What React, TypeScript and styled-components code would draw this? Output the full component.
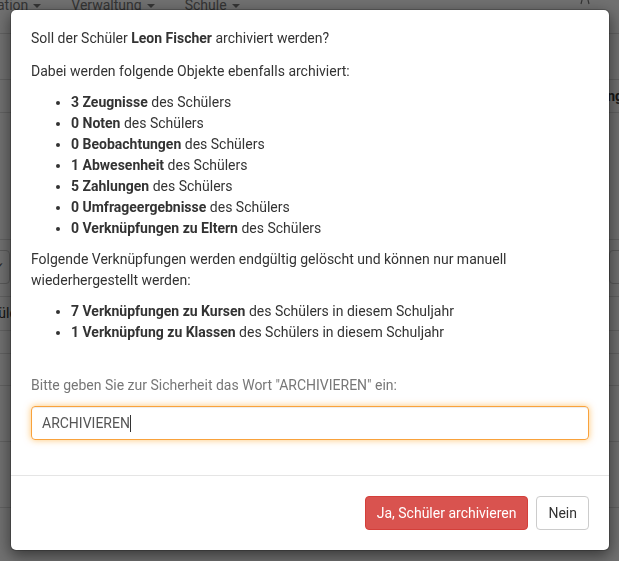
import React from "react";
import styled, { createGlobalStyle } from "styled-components";

const GlobalStyle = createGlobalStyle`
  html, body { margin: 0; padding: 0; }
  body {
    font-family: Roboto, "Liberation Sans", Arial, sans-serif;
    font-size: 14px;
    line-height: 21px;
    color: #333;
    background: #fff;
    overflow: hidden;
  }
  * { box-sizing: border-box; }
`;

/* ---------- background page ---------- */

const Page = styled.div`
  width: 619px;
  height: 561px;
  background: #fff;
  overflow: hidden;
`;

const Navbar = styled.nav`
  height: 34px;
  border-bottom: 1px solid #ddd;
  display: flex;
  align-items: flex-start;
  gap: 30px;
  margin-left: -3px;
`;

const NavItem = styled.span`
  color: #777;
  font-size: 14px;
  line-height: 14px;
  margin-top: -2px;
  white-space: nowrap;
  &::after {
    content: "";
    display: inline-block;
    margin-left: 5px;
    vertical-align: middle;
    border-top: 4px solid #777;
    border-left: 4px solid transparent;
    border-right: 4px solid transparent;
  }
`;

const NavIcon = styled.svg`
  margin-left: auto;
  margin-right: 26px;
  margin-top: -6px;
`;

const TableHead = styled.div`
  margin-top: 45px;
  height: 34px;
  border-top: 1px solid #ddd;
  border-bottom: 1px solid #ddd;
  display: flex;
  align-items: center;
  justify-content: flex-end;
  font-weight: 700;
  color: #333;
  font-size: 14px;
  margin-right: -4px;
`;

const Toolbar = styled.div`
  margin-top: 126px;
  border-top: 1px solid #ddd;
  padding-top: 10px;
  height: 57px;
  display: flex;
  justify-content: space-between;
  margin-left: -30px;
  margin-right: -30px;
`;

const GhostButton = styled.div`
  width: 40px;
  height: 34px;
  border: 1px solid #ccc;
  border-radius: 4px;
  display: flex;
  align-items: center;
  justify-content: flex-end;
  padding-right: 4px;
  color: #555;
`;

const BgRow = styled.div<{ $h: number }>`
  height: ${(p) => p.$h}px;
  border-top: 1px solid #ddd;
  display: flex;
  align-items: center;
  font-size: 14px;
  margin-left: -25px;
`;

/* ---------- modal ---------- */

const Backdrop = styled.div`
  position: fixed;
  inset: 0;
  background: rgba(0, 0, 0, 0.56);
  display: flex;
  justify-content: center;
  align-items: flex-start;
  padding: 9px 9px 9px 10px;
`;

const Modal = styled.div`
  width: 100%;
  background: #fff;
  border: 1px solid rgba(0, 0, 0, 0.2);
  border-radius: 6px;
  box-shadow: 0 5px 15px rgba(0, 0, 0, 0.5);
  background-clip: padding-box;
`;

const Body = styled.div`
  padding: 18px 20px 20px;
`;

const Para = styled.p<{ $mb?: number }>`
  margin: 0 0 ${(p) => p.$mb ?? 10}px;
`;

const List = styled.ul`
  margin: 0 0 10px;
  padding-left: 40px;
`;

const FormGroup = styled.div`
  margin-top: 32px;
  margin-bottom: 15px;
`;

const Label = styled.label`
  display: block;
  color: #777;
  margin-bottom: 10px;
`;

const Field = styled.div`
  height: 34px;
  border: 1px solid #f9a23c;
  border-radius: 4px;
  padding: 6px 10px;
  color: #555;
  line-height: 20px;
  box-shadow: inset 0 1px 1px rgba(0, 0, 0, 0.075), 0 0 7px rgba(255, 152, 0, 0.55);
  display: flex;
  align-items: center;
`;

const Caret = styled.span`
  display: inline-block;
  width: 1px;
  height: 17px;
  background: #333;
`;

const Footer = styled.div`
  padding: 20px;
  border-top: 1px solid #e5e5e5;
  display: flex;
  justify-content: flex-end;
  gap: 8px;
`;

const Button = styled.button<{ $variant: "danger" | "default" }>`
  font-family: inherit;
  font-size: 14px;
  line-height: 20px;
  height: 34px;
  padding: 6px 11px;
  border-radius: 4px;
  cursor: pointer;
  border: 1px solid ${(p) => (p.$variant === "danger" ? "#d43f3a" : "#ccc")};
  background: ${(p) => (p.$variant === "danger" ? "#d9534f" : "#fff")};
  color: ${(p) => (p.$variant === "danger" ? "#fff" : "#333")};
`;

const archived: [string, string][] = [
  ["3 Zeugnisse", "des Schülers"],
  ["0 Noten", "des Schülers"],
  ["0 Beobachtungen", "des Schülers"],
  ["1 Abwesenheit", "des Schülers"],
  ["5 Zahlungen", "des Schülers"],
  ["0 Umfrageergebnisse", "des Schülers"],
  ["0 Verknüpfungen zu Eltern", "des Schülers"],
];

const deleted: [string, string][] = [
  ["7 Verknüpfungen zu Kursen", "des Schülers in diesem Schuljahr"],
  ["1 Verknüpfung zu Klassen", "des Schülers in diesem Schuljahr"],
];

export default function App() {
  return (
    <>
      <GlobalStyle />
      <Page>
        <Navbar>
          <NavItem>ation</NavItem>
          <NavItem>Verwaltung</NavItem>
          <NavItem>Schule</NavItem>
          <NavIcon width="16" height="18" viewBox="0 0 16 18" fill="none" stroke="#777" strokeWidth="1.2">
            <path d="M4 10 L6 2 Q8 -2 10 2 L12 10" />
          </NavIcon>
        </Navbar>
        <TableHead>Einstellung</TableHead>
        <Toolbar>
          <GhostButton>✓</GhostButton>
          <GhostButton />
        </Toolbar>
        <BgRow $h={34}>Schüler</BgRow>
        <BgRow $h={23} />
        <BgRow $h={32} />
        <BgRow $h={56} />
        <BgRow $h={66} />
        <BgRow $h={60} />
      </Page>
      <Backdrop>
        <Modal role="dialog">
          <Body>
            <Para $mb={12}>
              Soll der Schüler <strong>Leon Fischer</strong> archiviert werden?
            </Para>
            <Para>Dabei werden folgende Objekte ebenfalls archiviert:</Para>
            <List>
              {archived.map(([b, r]) => (
                <li key={b}>
                  <strong>{b}</strong> {r}
                </li>
              ))}
            </List>
            <Para>
              Folgende Verknüpfungen werden endgültig gelöscht und können nur manuell
              wiederhergestellt werden:
            </Para>
            <List>
              {deleted.map(([b, r]) => (
                <li key={b}>
                  <strong>{b}</strong> {r}
                </li>
              ))}
            </List>
            <FormGroup>
              <Label>Bitte geben Sie zur Sicherheit das Wort "ARCHIVIEREN" ein:</Label>
              <Field role="textbox">
                ARCHIVIEREN
                <Caret />
              </Field>
            </FormGroup>
          </Body>
          <Footer>
            <Button $variant="danger">Ja, Schüler archivieren</Button>
            <Button $variant="default">Nein</Button>
          </Footer>
        </Modal>
      </Backdrop>
    </>
  );
}
